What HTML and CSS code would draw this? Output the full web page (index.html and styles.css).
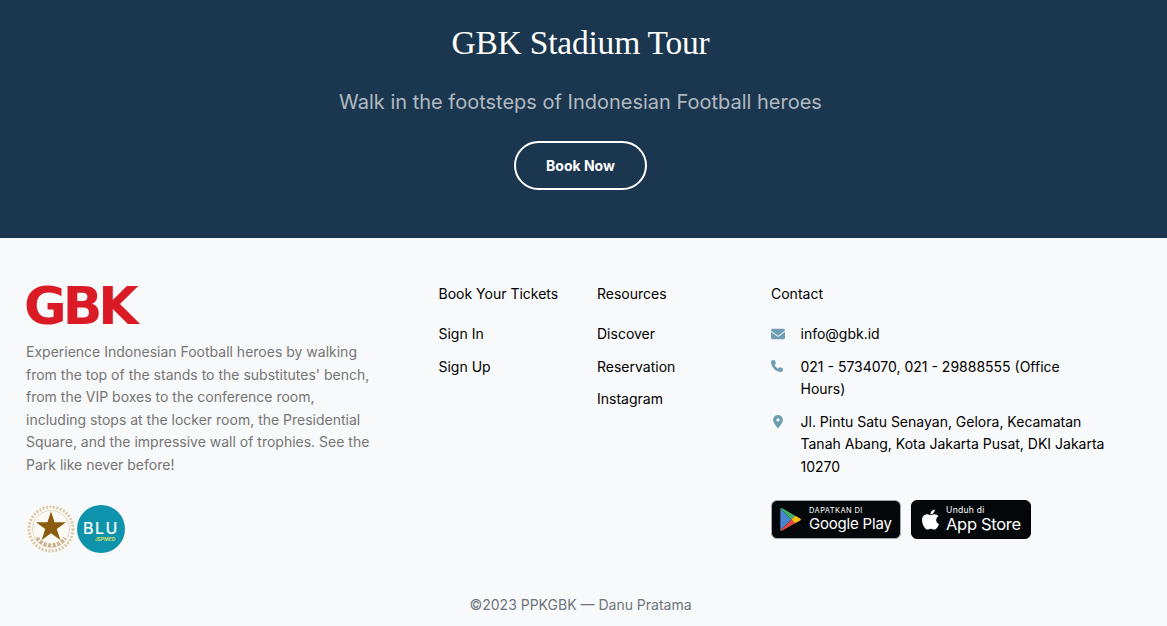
FILE: index.html
```html
<!DOCTYPE html>
<html lang="en">
<head>
    <meta charset="UTF-8">
    <meta name="viewport" content="width=device-width, initial-scale=1.0">
    <title>GBK Stadium Tour</title>
    <link rel="stylesheet" href="styles.css">
</head>
<body>

<section class="hero">
    <h1>GBK Stadium Tour</h1>
    <p>Walk in the footsteps of Indonesian Football heroes</p>
    <a class="book-btn" href="#">Book Now</a>
</section>

<footer class="footer">
    <div class="footer-grid">
        <div class="about">
            <div class="logo">GBK</div>
            <p class="about-text">Experience Indonesian Football heroes by walking from the top of the stands to the substitutes' bench, from the VIP boxes to the conference room, including stops at the locker room, the Presidential Square, and the impressive wall of trophies. See the Park like never before!</p>
            <div class="seals">
                <svg class="seal" viewBox="0 0 50 50" width="50" height="50">
                    <circle cx="25" cy="25" r="24.500" fill="#fbf9f4"/>
                    <circle cx="25" cy="25" r="22" fill="none" stroke="#d8c8ad" stroke-width="3" stroke-dasharray="2 1.500"/>
                    <circle cx="25" cy="25" r="18.500" fill="none" stroke="#e3d8c6" stroke-width="1"/>
                    <path d="M11 34a17 17 0 0 0 28 0" fill="none" stroke="#c9b28e" stroke-width="4" stroke-dasharray="3 1.500"/>
                    <path d="M25 7.500l3.600 10.800h11.400l-9.200 6.700 3.500 10.900L25 29.200l-9.300 6.700 3.500-10.900L10 18.300h11.400z" fill="#8a5c10"/>
                </svg>
                <div class="blu">
                    <span class="blu-name">BLU</span>
                    <span class="blu-sub">JSPMED</span>
                </div>
            </div>
        </div>

        <div class="links">
            <h4>Book Your Tickets</h4>
            <a href="#">Sign In</a>
            <a href="#">Sign Up</a>
        </div>

        <div class="links">
            <h4>Resources</h4>
            <a href="#">Discover</a>
            <a href="#">Reservation</a>
            <a href="#">Instagram</a>
        </div>

        <div class="contact">
            <h4>Contact</h4>
            <div class="contact-row">
                <span class="icon-box"><svg viewBox="0 0 512 512" width="14" height="14"><path d="M48 64C21.500 64 0 85.500 0 112c0 15.100 7.100 29.300 19.200 38.400l217.600 163.200c11.400 8.500 27 8.500 38.400 0l217.600-163.200c12.100-9.100 19.200-23.300 19.200-38.400 0-26.500-21.500-48-48-48H48zM0 176v208c0 35.300 28.700 64 64 64h384c35.300 0 64-28.700 64-64V176L294.400 339.200c-22.800 17.100-54 17.100-76.800 0L0 176z"/></svg></span>
                <span>info@gbk.id</span>
            </div>
            <div class="contact-row">
                <span class="icon-box"><svg viewBox="0 0 512 512" width="12" height="12"><path d="M164.900 24.600c-7.700-18.600-28-28.500-47.400-23.200l-88 24C12.100 30.200 0 46 0 64c0 247.400 200.600 448 448 448 18 0 33.800-12.100 38.600-29.500l24-88c5.300-19.400-4.600-39.700-23.200-47.400l-96-40c-16.300-6.800-35.200-2.100-46.300 11.600L304.700 368c-70.400-33.300-127.400-90.300-160.700-160.700l49.300-40.300c13.700-11.200 18.400-30 11.600-46.300l-40-96z"/></svg></span>
                <span>021 - 5734070, 021 - 29888555 (Office Hours)</span>
            </div>
            <div class="contact-row">
                <span class="icon-box"><svg class="pin" viewBox="0 0 384 512" width="10" height="13"><path d="M215.700 499.200C267 435 384 279.400 384 192 384 86 298 0 192 0S0 86 0 192c0 87.400 117 243 168.300 307.200 12.300 15.300 35.100 15.300 47.400 0zM192 128a64 64 0 1 1 0 128 64 64 0 1 1 0-128z"/></svg></span>
                <span>Jl. Pintu Satu Senayan, Gelora, Kecamatan Tanah Abang, Kota Jakarta Pusat, DKI Jakarta 10270</span>
            </div>
            <div class="stores">
                <a class="store store-google" href="#">
                    <svg viewBox="0 0 24 27" width="23" height="25">
                        <path d="M1 1.500v24L13 13.500z" fill="#4a86d0"/>
                        <path d="M1 1.500L13 13.500l4-4L2.500 1z" fill="#3fb26b"/>
                        <path d="M1 25.500L13 13.500l4 4L2.500 26z" fill="#e2483f"/>
                        <path d="M17 9.500l5.500 3c1 .6 1 1.500 0 2l-5.500 3-4-4z" fill="#fbbc12"/>
                    </svg>
                    <span class="store-text">
                        <span class="store-small caps">DAPATKAN DI</span>
                        <span class="store-big store-big-google">Google Play</span>
                    </span>
                </a>
                <a class="store store-apple" href="#">
                    <svg viewBox="0 0 384 512" width="19" height="23"><path fill="#fff" d="M318.700 268.700c-.2-36.700 16.400-64.400 50-84.800-18.800-26.900-47.200-41.700-84.700-44.600-35.500-2.800-74.300 20.700-88.500 20.700-15 0-49.400-19.700-76.400-19.700C63.300 141.200 4 184.800 4 273.500q0 39.300 14.400 81.200c12.800 36.700 59 126.700 107.200 125.200 25.200-.6 43-17.900 75.800-17.900 31.800 0 48.300 17.900 76.400 17.900 48.600-.7 90.400-82.500 102.600-119.300-65.200-30.700-61.700-90-61.700-91.900zm-56.600-164.200c27.300-32.400 24.800-61.900 24-72.500-24.100 1.400-52 16.400-67.900 34.900-17.500 19.800-27.800 44.300-25.600 71.900 26.100 2 49.900-11.400 69.500-34.300z"/></svg>
                    <span class="store-text">
                        <span class="store-small">Unduh di</span>
                        <span class="store-big">App Store</span>
                    </span>
                </a>
            </div>
        </div>
    </div>

    <p class="copyright">©2023 PPKGBK — Danu Pratama</p>
</footer>

</body>
</html>
```

FILE: styles.css
```css
body {
    font-family: Inter, "Noto Sans", sans-serif;
    background-color: #f8f9fa;
    color: #000;
    margin: 0;
    padding: 0;
    font-size: 14px;
    line-height: 22.5px;
}
a {
    color: inherit;
    text-decoration: none;
}
.hero {
    height: 238px;
    box-sizing: border-box;
    padding: 18px 6px 0 0;
    background-color: #1b374f;
    text-align: center;
    color: #fff;
}
.hero h1 {
    font-family: "Liberation Serif", serif;
    font-weight: 400;
    font-size: 33.5px;
    letter-spacing: -0.2px;
    line-height: 50px;
    margin: 0;
}
.hero p {
    font-size: 20px;
    line-height: 30px;
    color: rgba(255, 255, 255, 0.66);
    margin: 19px 0 24px;
}
.book-btn {
    display: inline-block;
    box-sizing: border-box;
    width: 133px;
    height: 49px;
    line-height: 45px;
    border: 2px solid #fff;
    border-radius: 25px;
    font-weight: 700;
    font-size: 14px;
}
.footer {
    padding: 45px 0 0 26px;
}
.footer-grid {
    display: grid;
    grid-template-columns: 412.5px 158.5px 174px 336px;
}
.logo {
    font-family: "DejaVu Sans", sans-serif;
    font-weight: 700;
    font-size: 52px;
    line-height: 46px;
    height: 50px;
    color: #da1b26;
    letter-spacing: -4px;
    margin-left: -2px;
}
.about-text {
    width: 350px;
    margin: 8px 0 28px;
    color: #757575;
}
.seals {
    display: flex;
    gap: 1px;
}
.seal {
    display: block;
}
.blu {
    box-sizing: border-box;
    width: 48px;
    height: 48px;
    margin-top: 1px;
    padding-top: 4px;
    border-radius: 50%;
    background-color: #0e93ac;
    color: #fff;
    display: flex;
    flex-direction: column;
    align-items: center;
    justify-content: center;
}
.blu-name {
    font-size: 16px;
    font-weight: 500;
    line-height: 16px;
    letter-spacing: 1.5px;
}
.blu-sub {
    font-size: 5px;
    line-height: 6px;
    font-weight: 700;
    color: #c9dc6a;
    margin-left: 8px;
}
h4 {
    font-size: 14px;
    font-weight: 400;
    margin: 0 0 17.5px;
}
.links a {
    display: block;
    margin-bottom: 10px;
}
.contact-row {
    display: flex;
    margin-bottom: 10px;
}
.icon-box {
    flex: 0 0 29.5px;
    fill: #6f9db3;
}
.icon-box svg {
    display: block;
    margin-top: 4px;
}
.icon-box .pin {
    margin-left: 2px;
}
.stores {
    display: flex;
    gap: 10px;
    margin-top: 22px;
}
.store {
    display: flex;
    align-items: center;
    box-sizing: border-box;
    height: 39px;
    border-radius: 6px;
    border: 1px solid #a6a6a6;
    background-color: #05080a;
    color: #fff;
}
.store-google {
    width: 130px;
    padding-left: 7px;
    gap: 7px;
}
.store-apple {
    width: 120px;
    padding-left: 9px;
    gap: 6px;
    border-color: #000;
}
.store-text {
    display: flex;
    flex-direction: column;
}
.store-small {
    font-size: 8.5px;
    line-height: 9px;
    letter-spacing: 0.3px;
}
.caps {
    font-size: 7.5px;
    letter-spacing: 0.4px;
}
.store-big {
    font-size: 16.5px;
    line-height: 18px;
    letter-spacing: -0.3px;
}
.store-big-google {
    font-size: 15px;
    letter-spacing: -0.2px;
}
.copyright {
    margin: 40px 0 0 -26px;
    padding-right: 6px;
    text-align: center;
    color: #6c757d;
}
```
